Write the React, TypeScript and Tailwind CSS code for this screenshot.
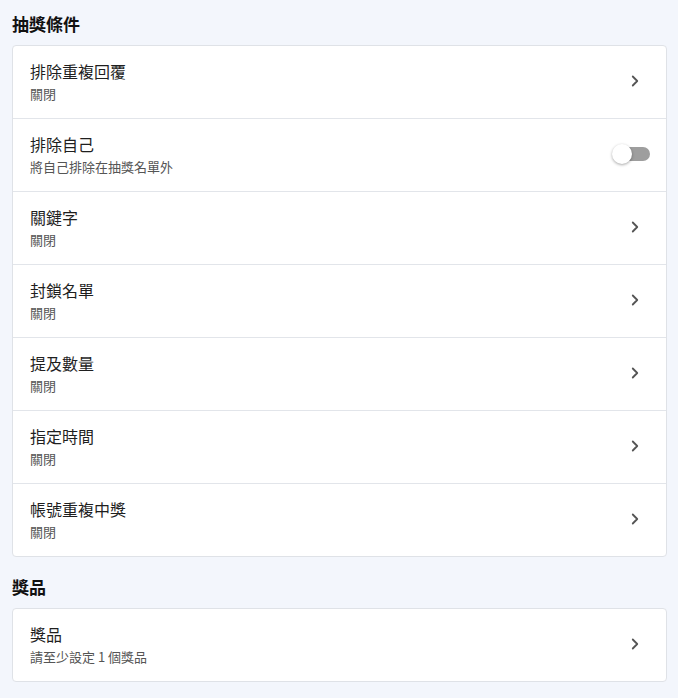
import { ChevronRight } from "lucide-react";

interface Setting {
  title: string;
  subtitle: string;
  toggle?: boolean;
}

const conditions: Setting[] = [
  { title: "排除重複回覆", subtitle: "關閉" },
  { title: "排除自己", subtitle: "將自己排除在抽獎名單外", toggle: true },
  { title: "關鍵字", subtitle: "關閉" },
  { title: "封鎖名單", subtitle: "關閉" },
  { title: "提及數量", subtitle: "關閉" },
  { title: "指定時間", subtitle: "關閉" },
  { title: "帳號重複中獎", subtitle: "關閉" },
];

const prizes: Setting[] = [{ title: "獎品", subtitle: "請至少設定 1 個獎品" }];

const Toggle = () => (
  <div className="relative w-[38px] h-[20px] flex items-center">
    <div className="ml-auto w-[34px] h-[14px] rounded-full bg-[#9e9e9e]" />
    <div className="absolute left-0 top-0 w-[20px] h-[20px] rounded-full bg-white shadow-[0_1px_3px_rgba(0,0,0,0.35)]" />
  </div>
);

const Row = ({ item }: { item: Setting }) => (
  <div className="flex items-center justify-between pl-[17px] pr-[22px] pt-[14px] pb-[16px] border-b border-[#e2e5ea] last:border-b-0">
    <div className="flex flex-col">
      <span className="text-[16px] leading-[22px] text-[#1f1f1f]">{item.title}</span>
      <span className="mt-[3px] text-[13px] leading-[17px] text-[#555]">{item.subtitle}</span>
    </div>
    {item.toggle ? (
      <div className="mr-[-6px]">
        <Toggle />
      </div>
    ) : (
      <ChevronRight className="w-[18px] h-[18px] text-[#555]" strokeWidth={2.4} />
    )}
  </div>
);

const Section = ({ title, items, className }: { title: string; items: Setting[]; className?: string }) => (
  <div className={className}>
    <h2 className="text-[17px] leading-[24px] font-bold text-[#111] mb-[9px]">{title}</h2>
    <div className="bg-white border border-[#dfe2e7] rounded-[4px]">
      {items.map((item) => (
        <Row key={item.title} item={item} />
      ))}
    </div>
  </div>
);

export default function App() {
  return (
    <div
      className="min-h-[698px] w-[678px] bg-[#f3f6fc] pl-[12px] pr-[11px] pt-[12px] pb-[16px] overflow-hidden"
      style={{ fontFamily: '"Noto Sans CJK TC", "Noto Sans", sans-serif' }}
    >
      <Section title="抽獎條件" items={conditions} />
      <Section title="獎品" items={prizes} className="mt-[18px]" />
    </div>
  );
}
